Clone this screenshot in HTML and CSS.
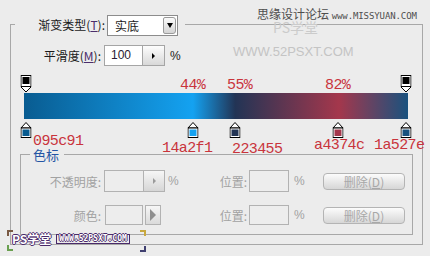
FILE: index.html
```html
<!DOCTYPE html>
<html>
<head>
  <title>渐变编辑器</title>
  <link rel="stylesheet" href="styles.css">
</head>
<body>
  <div class="dialog">
    <fieldset class="outer">
      <legend class="outer-title">
        <span class="title-label">渐变类型(<u>T</u>):</span>
        <span class="select">实底<span class="select-arrow"><i class="tri-down"></i></span></span>
      </legend>

      <div class="smooth-row">
        <span class="row-label">平滑度(<u>M</u>):</span>
        <span class="field">100</span><span class="spin"><i class="tri-right"></i></span>
        <span class="unit">%</span>
      </div>

      <div class="track">
        <div class="bar"></div>
        <div class="stops">
          <!-- opacity stops -->
          <svg class="stop top" style="left: 0%" width="11" height="18" viewBox="0 0 11 18"><rect x="0.5" y="0.5" width="10" height="11" fill="#fff" stroke="#000"/><rect x="2" y="2" width="7" height="7" fill="#000"/><path d="M0.5 12 L5.5 17 L10.5 12" fill="#fff" stroke="#000"/></svg>
          <svg class="stop top" style="left: 100%" width="11" height="18" viewBox="0 0 11 18"><rect x="0.5" y="0.5" width="10" height="11" fill="#fff" stroke="#000"/><rect x="2" y="2" width="7" height="7" fill="#000"/><path d="M0.5 12 L5.5 17 L10.5 12" fill="#fff" stroke="#000"/></svg>
          <!-- colour stops -->
          <svg class="stop bottom" style="left: 0%" width="11" height="16" viewBox="0 0 11 16"><path d="M0.5 6 L5.5 0.5 L10.5 6 Z" fill="#fff" stroke="#000"/><rect x="0.5" y="6" width="10" height="9.5" fill="#fff" stroke="#000"/><rect x="2" y="7.5" width="7" height="6.5" fill="#095c91"/></svg>
          <svg class="stop bottom" style="left: 44%" width="11" height="16" viewBox="0 0 11 16"><path d="M0.5 6 L5.5 0.5 L10.5 6 Z" fill="#fff" stroke="#000"/><rect x="0.5" y="6" width="10" height="9.5" fill="#fff" stroke="#000"/><rect x="2" y="7.5" width="7" height="6.5" fill="#14a2f1"/></svg>
          <svg class="stop bottom" style="left: 55%" width="11" height="16" viewBox="0 0 11 16"><path d="M0.5 6 L5.5 0.5 L10.5 6 Z" fill="#fff" stroke="#000"/><rect x="0.5" y="6" width="10" height="9.5" fill="#fff" stroke="#000"/><rect x="2" y="7.5" width="7" height="6.5" fill="#223455"/></svg>
          <svg class="stop bottom" style="left: 82%" width="11" height="16" viewBox="0 0 11 16"><path d="M0.5 6 L5.5 0.5 L10.5 6 Z" fill="#fff" stroke="#000"/><rect x="0.5" y="6" width="10" height="9.5" fill="#fff" stroke="#000"/><rect x="2" y="7.5" width="7" height="6.5" fill="#a4374c"/></svg>
          <svg class="stop bottom" style="left: 100%" width="11" height="16" viewBox="0 0 11 16"><path d="M0.5 6 L5.5 0.5 L10.5 6 Z" fill="#fff" stroke="#000"/><rect x="0.5" y="6" width="10" height="9.5" fill="#fff" stroke="#000"/><rect x="2" y="7.5" width="7" height="6.5" fill="#1a527e"/></svg>
        </div>

        <!-- annotations -->
        <span class="note note-44">44%</span>
        <span class="note note-55">55%</span>
        <span class="note note-82">82%</span>
        <span class="note note-c1">095c91</span>
        <span class="note note-c2">14a2f1</span>
        <span class="note note-c3">223455</span>
        <span class="note note-c4">a4374c</span>
        <span class="note note-c5">1a527e</span>
      </div>

      <fieldset class="inner">
        <legend class="inner-title">色标</legend>
        <div class="stop-row first">
          <span class="cell-label">不透明度:</span>
          <span class="ctl">
            <span class="dis-field wide"></span><span class="dis-spin"><i class="tri-right gray"></i></span>
            <span class="dis-unit">%</span>
          </span>
          <span class="cell-label">位置:</span>
          <span class="ctl">
            <span class="dis-field pos"></span><span class="dis-unit pct">%</span>
          </span>
          <span class="btn">删除(<u>D</u>)</span>
        </div>
        <div class="stop-row second">
          <span class="cell-label">颜色:</span>
          <span class="ctl">
            <span class="dis-field swatch"></span><span class="dis-pick"><i class="tri-big"></i></span>
          </span>
          <span class="cell-label">位置:</span>
          <span class="ctl">
            <span class="dis-field pos"></span><span class="dis-unit pct">%</span>
          </span>
          <span class="btn">删除(<u>D</u>)</span>
        </div>
      </fieldset>
    </fieldset>
  </div>

  <div class="wm-top">思缘设计论坛 <span class="wm-url">www.MISSYUAN.COM</span></div>
  <div class="wm-faint-logo">PS学堂</div>
  <div class="wm-faint-url">WWW.52PSXT.COM</div>

  <div class="badge">
    <span class="badge-name">PS学堂</span>
    <span class="badge-url">WWW.52PSXT.COM</span>
    <i class="corner tl"></i><i class="corner bl"></i><i class="corner tr"></i><i class="corner br"></i>
  </div>
</body>
</html>
```

FILE: styles.css
```css
body {
  margin: 0;
  width: 430px;
  height: 256px;
  overflow: hidden;
  position: relative;
  background-color: #ececec;
  font-family: "Noto Sans CJK SC", "Liberation Sans", sans-serif;
  font-size: 12px;
  color: #1a1a1a;
}

u {
  color: #4b2d6b;
}

.dialog {
  padding-top: 14px;
}

fieldset {
  box-sizing: border-box;
  border: 1px solid #a8a8a8;
  min-width: 0;
}

.outer {
  margin: 0 0 0 10px;
  width: 413px;
  padding: 0 0 9px 0;
}

.outer-title {
  display: flex;
  align-items: center;
  height: 21px;
  margin-left: 4px;
  padding: 0 7px 0 17px;
}

.title-label {
  width: 73px;
  text-align: right;
}

.select {
  position: relative;
  box-sizing: border-box;
  margin-left: 2px;
  width: 71px;
  height: 21px;
  margin-top: 2px;
  border: 1px solid #8c8c8c;
  background-color: white;
  padding-left: 7px;
  line-height: 19px;
}

.select-arrow {
  position: absolute;
  right: 1px;
  top: 1px;
  bottom: 1px;
  width: 13px;
  border: 1px solid #9a9a9a;
  border-radius: 2px 3px 3px 2px;
  box-sizing: border-box;
  background: linear-gradient(#fbfbfb, #d4d4d4);
  display: flex;
  align-items: center;
  justify-content: center;
}

.tri-down {
  width: 0;
  height: 0;
  border-top: 5px solid #000;
  border-left: 3px solid transparent;
  border-right: 3px solid transparent;
}

.tri-right {
  width: 0;
  height: 0;
  border-left: 3px solid #000;
  border-top: 3px solid transparent;
  border-bottom: 3px solid transparent;
}

.tri-right.gray {
  border-left-color: #9a9a9a;
}

.smooth-row {
  display: flex;
  align-items: center;
  margin-top: 10px;
  height: 21px;
}

.row-label {
  width: 90px;
  text-align: right;
}

.field {
  box-sizing: border-box;
  margin-left: 3px;
  width: 39px;
  height: 21px;
  border: 1px solid #a5a5a5;
  background-color: white;
  padding-left: 6px;
  font-family: "Liberation Sans", sans-serif;
  line-height: 19px;
  color: #2a1a33;
}

.spin {
  box-sizing: border-box;
  width: 22px;
  height: 21px;
  border: 1px solid #a5a5a5;
  border-left: none;
  background: linear-gradient(#fdfdfd, #d8d8d8);
  display: flex;
  align-items: center;
  justify-content: center;
}

.unit {
  margin-left: 5px;
  font-family: "Liberation Sans", sans-serif;
}

/* gradient strip */
.track {
  position: relative;
  box-sizing: border-box;
  margin-left: 13px;
  width: 384px;
  height: 81px;
  padding-top: 27px;
}

.bar {
  height: 26px;
  background: linear-gradient(to right, #095c91 0%, #14a2f1 44%, #223455 55%, #a4374c 82%, #1a527e 100%);
}

.stops {
  position: absolute;
  left: 2px;
  right: 2px;
  top: 0;
  bottom: 0;
}

.stop {
  position: absolute;
  display: block;
  transform: translateX(-50%);
}

.stop.top {
  top: 9px;
}

.stop.bottom {
  top: 56px;
}

.note {
  position: absolute;
  font-family: "Liberation Mono", monospace;
  font-size: 15px;
  line-height: 12px;
  letter-spacing: -0.6px;
  color: #c9343c;
  white-space: nowrap;
}

.note-44 { left: 156px; top: 14px; }
.note-55 { left: 203px; top: 14px; }
.note-82 { left: 301px; top: 14px; }
.note-c1 { left: 9px; top: 70px; }
.note-c2 { left: 138px; top: 77px; }
.note-c3 { left: 208px; top: 78px; }
.note-c4 { left: 290px; top: 74px; }
.note-c5 { left: 350px; top: 74px; }

/* colour stop group */
.inner {
  margin: 0 9px;
  padding: 0 0 9px 0;
}

.inner-title {
  margin-left: 9px;
  padding: 0 5px 0 3px;
  font-size: 13px;
  line-height: 15px;
  color: #2455a4;
}

.stop-row {
  display: grid;
  grid-template-columns: 80px 96px 50px 76px 82px;
  align-items: center;
  color: #a2a2a2;
}

.stop-row.first {
  margin-top: 8px;
  height: 22px;
}

.stop-row.second {
  margin-top: 13px;
  height: 20px;
}

.cell-label {
  text-align: right;
}

.ctl {
  display: flex;
  align-items: center;
}

.dis-field {
  box-sizing: border-box;
  border: 1px solid #b2b2b2;
  background-color: #ededed;
}

.dis-field.wide {
  margin-left: 3px;
  width: 40px;
  height: 22px;
}

.dis-field.swatch {
  margin-left: 4px;
  width: 38px;
  height: 20px;
}

.dis-field.pos {
  margin-left: 2px;
  width: 40px;
  height: 22px;
}

.second .dis-field.pos {
  height: 20px;
}

.dis-spin {
  box-sizing: border-box;
  width: 21px;
  height: 22px;
  border: 1px solid #b2b2b2;
  border-left: none;
  background: linear-gradient(#f6f6f6, #d6d6d6);
  display: flex;
  align-items: center;
  justify-content: center;
}

.dis-pick {
  box-sizing: border-box;
  margin-left: 2px;
  width: 16px;
  height: 20px;
  border: 1px solid #b2b2b2;
  background: linear-gradient(#f6f6f6, #dadada);
  display: flex;
  align-items: center;
  justify-content: center;
}

.tri-big {
  width: 0;
  height: 0;
  border-left: 6px solid #8e8e8e;
  border-top: 6px solid transparent;
  border-bottom: 6px solid transparent;
}

.dis-unit {
  margin-left: 3px;
  font-family: "Liberation Sans", sans-serif;
}

.dis-unit.pct {
  margin-left: 5px;
}

.btn {
  box-sizing: border-box;
  width: 82px;
  height: 17px;
  border: 1px solid #b4b4b4;
  border-radius: 4px;
  background: linear-gradient(#fcfcfc, #d6d6d6);
  text-align: center;
  line-height: 15px;
  color: #a8a8a8;
}

.btn u {
  color: #a8a8a8;
}

/* watermarks */
.wm-top {
  position: absolute;
  left: 257px;
  top: 8px;
  line-height: 12px;
  color: #4e4e4e;
  white-space: nowrap;
}

.wm-url {
  font-family: "DejaVu Sans Mono", monospace;
  font-size: 9px;
  letter-spacing: -0.1px;
}

.wm-faint-logo {
  position: absolute;
  left: 273px;
  top: 21px;
  font-size: 14px;
  line-height: 12px;
  color: #cbcbcb;
}

.wm-faint-url {
  position: absolute;
  left: 233px;
  top: 44px;
  font-family: "Liberation Sans", sans-serif;
  font-size: 13px;
  color: #c4c4c4;
}

.badge {
  position: absolute;
  left: 12px;
  top: 232px;
  display: flex;
  align-items: center;
  gap: 5px;
  height: 14px;
}

.badge-name {
  font-size: 12px;
  font-weight: bold;
  line-height: 12px;
  color: #fff;
  text-shadow: 1px 0 #4a2a6a, -1px 0 #4a2a6a, 0 1px #4a2a6a, 0 -1px #4a2a6a;
}

.badge-url {
  font-family: "DejaVu Sans Mono", monospace;
  font-size: 8px;
  font-weight: bold;
  line-height: 8px;
  padding: 0 2px;
  border: 1px solid #4a2a6a;
  color: #fff;
  text-shadow: 1px 0 #4a2a6a, -1px 0 #4a2a6a, 0 1px #4a2a6a, 0 -1px #4a2a6a;
}

.corner {
  position: absolute;
  width: 4px;
  height: 4px;
}

.corner.tl { left: -5px; top: -2px; border-left: 2px solid #7a5a44; border-top: 2px solid #7a5a44; }
.corner.bl { left: -5px; top: 13px; border-left: 2px solid #6aa050; border-bottom: 2px solid #6aa050; }
.corner.tr { left: 128px; top: -2px; border-right: 2px solid #c8a840; border-top: 2px solid #c8a840; }
.corner.br { left: 128px; top: 14px; border-right: 2px solid #404070; border-bottom: 2px solid #404070; }
```
